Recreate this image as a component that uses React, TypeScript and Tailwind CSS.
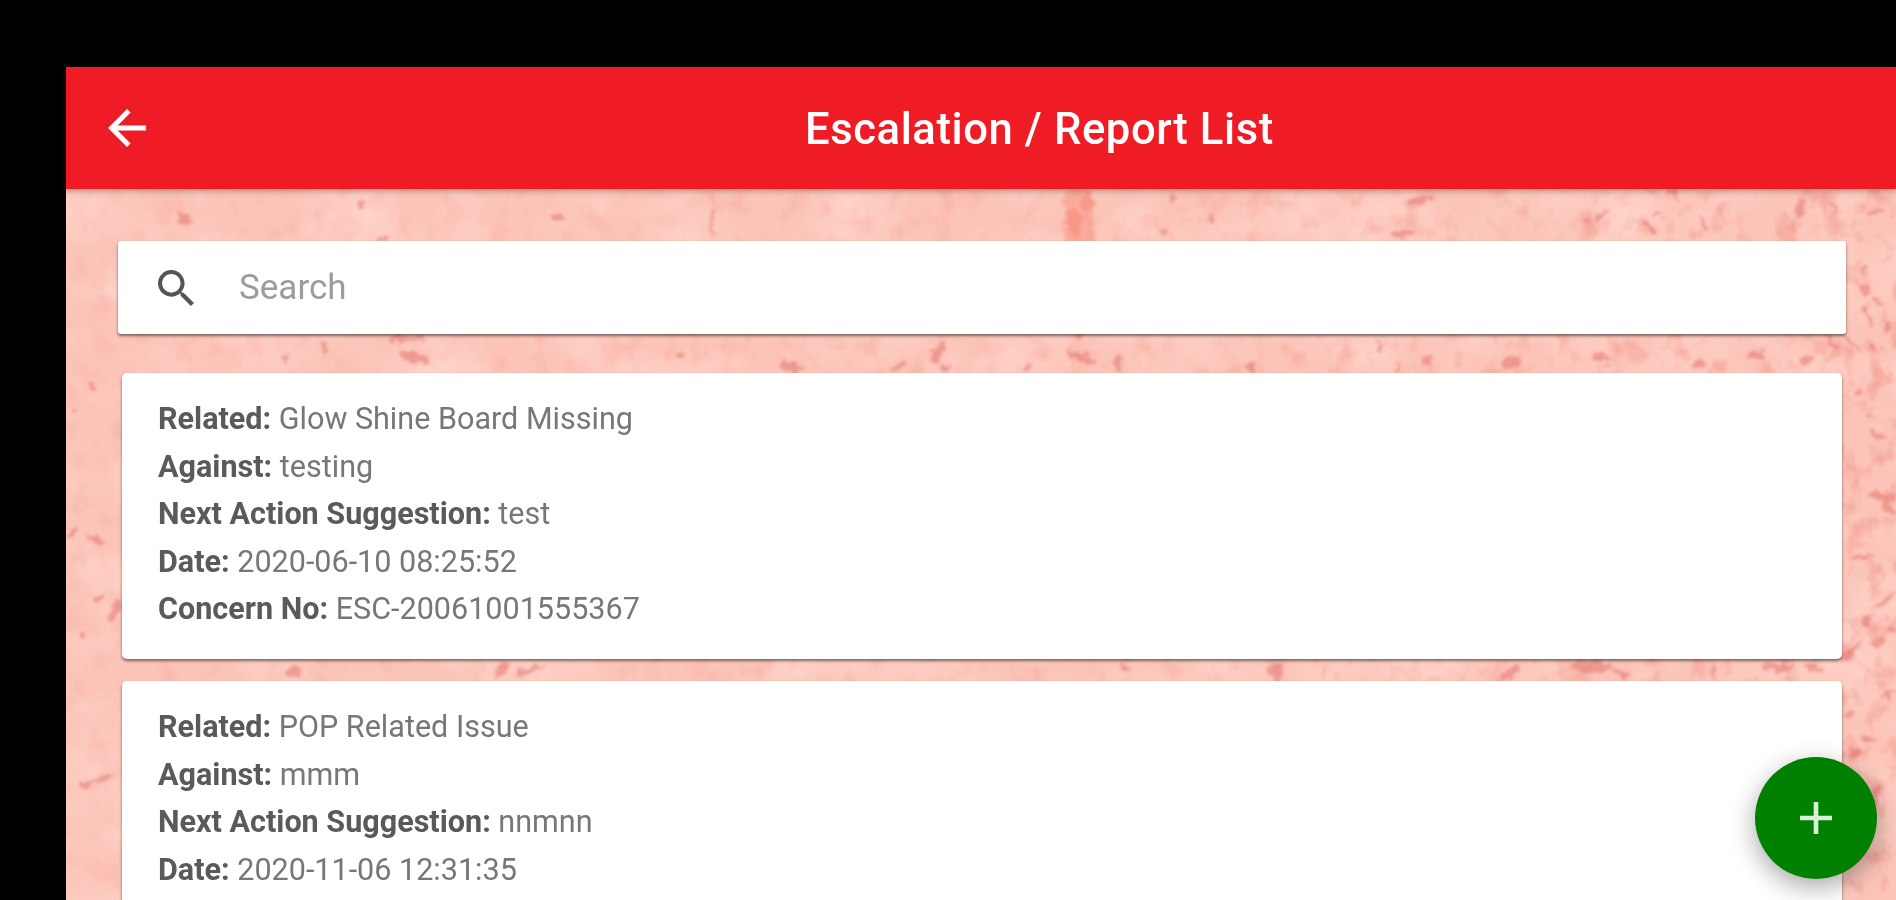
import React from "react";

type Report = {
  related: string;
  against: string;
  suggestion: string;
  date: string;
  concernNo?: string;
};

const reports: Report[] = [
  {
    related: "Glow Shine Board Missing",
    against: "testing",
    suggestion: "test",
    date: "2020-06-10 08:25:52",
    concernNo: "ESC-20061001555367",
  },
  {
    related: "POP Related Issue",
    against: "mmm",
    suggestion: "nnmnn",
    date: "2020-11-06 12:31:35",
  },
];

// Marks in the stone: x, y, half width, half height, angle
const marks: number[][] = [
  [185, 219, 10, 5, 20], [362, 205, 5, 3, -50], [558, 217, 6, 3, -20], [383, 239, 5, 2, 0], [713, 217, 1, 20, 0],
  [1173, 197, 2, 5, 10], [1164, 232, 4, 6, 0], [1212, 217, 2, 7, 8], [1421, 200, 13, 3, -15], [1403, 234, 12, 3, -8],
  [1602, 215, 7, 3, -40], [1588, 223, 5, 2, 40], [1650, 227, 9, 3, 40], [1657, 212, 4, 2, -50], [1674, 193, 8, 3, 50],
  [1704, 223, 2, 9, -20], [1800, 209, 3, 11, 10], [1834, 208, 2, 8, -20], [1876, 212, 9, 3, -10],
  [286, 357, 3, 5, 15], [324, 347, 3, 6, 25], [407, 338, 18, 3, 0], [416, 358, 17, 5, 15], [680, 355, 4, 4, 0],
  [792, 367, 13, 4, 10], [898, 367, 9, 3, -20], [938, 352, 4, 12, 30], [945, 367, 7, 3, 0],
  [1025, 367, 3, 5, 30], [1080, 357, 15, 3, 25], [1077, 336, 4, 3, 0], [1118, 364, 3, 7, 0], [1252, 367, 5, 5, 0],
  [1380, 347, 3, 5, 0], [1427, 360, 8, 3, -30], [1397, 367, 2, 6, 0], [1511, 362, 10, 5, 0], [1602, 358, 9, 4, 20],
  [1756, 355, 9, 4, 0], [1700, 365, 8, 3, 0], [1807, 360, 9, 4, -35],
  [293, 672, 8, 5, 0], [503, 668, 10, 5, -40], [530, 670, 15, 3, -20], [1125, 667, 5, 3, 0], [1276, 672, 8, 8, 0],
  [1324, 673, 1, 9, 0], [1511, 672, 13, 4, -35], [1590, 667, 20, 6, 0], [1620, 674, 10, 3, 30], [1713, 672, 2, 9, 0],
  [1777, 667, 16, 4, 5], [1815, 668, 10, 3, 15],
  [92, 387, 5, 3, 0], [75, 410, 4, 2, 0], [73, 532, 5, 4, 0], [97, 540, 9, 3, 5], [99, 599, 4, 3, 0], [82, 635, 5, 3, 0],
  [115, 610, 4, 12, 20], [85, 785, 6, 3, 0], [100, 780, 12, 2, -15],
  [1865, 268, 2, 3, 0], [1866, 290, 4, 7, -35], [1878, 302, 7, 3, 35], [1868, 317, 2, 12, -20], [1889, 327, 5, 4, 30],
  [1833, 343, 2, 10, -35], [1854, 344, 2, 9, -45], [1873, 347, 3, 8, -25], [1859, 392, 4, 3, 0], [1871, 417, 3, 2, 0],
  [1878, 435, 9, 3, 25], [1883, 497, 13, 5, 15], [1889, 508, 8, 4, 30], [1863, 557, 12, 2, 0], [1879, 642, 9, 4, -15],
  [1856, 647, 3, 8, 20], [1893, 628, 5, 3, 0], [1865, 620, 4, 3, 0], [1886, 600, 12, 3, -40], [1849, 715, 6, 5, 0],
  [1869, 740, 7, 3, 20], [1856, 753, 7, 5, 0], [1889, 695, 11, 2, -15], [1876, 797, 4, 10, 0], [1848, 655, 5, 6, 0],
];

const Texture: React.FC = () => (
  <svg className="absolute inset-0 w-full h-full" aria-hidden="true">
    <defs>
      <filter id="mottle" x="0" y="0" width="100%" height="100%" colorInterpolationFilters="sRGB">
        <feTurbulence type="fractalNoise" baseFrequency="0.012 0.018" numOctaves="3" seed="4" />
        <feColorMatrix values="0 0 0 0 1  0 0 0 0 0.84  0 0 0 0 0.8  1.8 0 0 0 -0.7" />
      </filter>
      <filter id="grain" x="0" y="0" width="100%" height="100%" colorInterpolationFilters="sRGB">
        <feTurbulence type="fractalNoise" baseFrequency="0.045 0.04" numOctaves="3" seed="11" />
        <feColorMatrix values="0 0 0 0 0.93  0 0 0 0 0.5  0 0 0 0 0.46  0 2 0 0 -1" />
      </filter>
      <filter id="rough" x="0" y="0" width="100%" height="100%" filterUnits="userSpaceOnUse">
        <feTurbulence type="fractalNoise" baseFrequency="0.12" numOctaves="2" seed="3" />
        <feDisplacementMap in="SourceGraphic" scale="12" xChannelSelector="R" yChannelSelector="G" />
        <feGaussianBlur stdDeviation="1.8" />
      </filter>
      <linearGradient id="fade">
        <stop offset="0" stopColor="#fff" stopOpacity="0.2" />
        <stop offset="0.6" stopColor="#fff" stopOpacity="0.3" />
        <stop offset="1" stopColor="#fff" stopOpacity="0.7" />
      </linearGradient>
      <mask id="density">
        <rect width="100%" height="100%" fill="url(#fade)" />
      </mask>
    </defs>
    <rect width="100%" height="100%" filter="url(#mottle)" />
    <g mask="url(#density)">
      <rect width="100%" height="100%" filter="url(#grain)" />
    </g>
    <g filter="url(#rough)">
      <g transform="translate(-66 -189)" fill="#dc5a57" fillOpacity="0.42">
        <rect x="1065" y="180" width="28" height="70" fill="#f8816f" fillOpacity="0.38" />
        <ellipse cx="1073" cy="223" rx="7" ry="14" fill="#f8816f" />
        <ellipse cx="1087" cy="203" rx="5" ry="9" fill="#f8816f" />
        {marks.map(([x, y, rx, ry, angle], i) => (
          <ellipse key={i} cx={x} cy={y} rx={rx} ry={ry} transform={`rotate(${angle} ${x} ${y})`} />
        ))}
      </g>
    </g>
  </svg>
);

const Field: React.FC<{ label: string; value: string }> = ({ label, value }) => (
  <p className="whitespace-nowrap">
    <b className="font-bold text-[#5a5a5a]">{label}:</b> {value}
  </p>
);

const App: React.FC = () => {
  return (
    <div className="h-[900px] w-full overflow-hidden bg-black pl-[66px] pt-[67px] font-['Roboto',sans-serif]">
      <div className="relative flex h-full flex-col bg-[#fcc4b8]">
        {/* Header */}
        <header className="relative z-10 flex h-[122px] shrink-0 items-center bg-[#ef1c25] pl-[33px] shadow-[0_2px_6px_rgba(90,60,50,0.45)]">
          <svg viewBox="0 0 24 24" className="size-[56px] fill-white">
            <path
              d="M20 11H7.83l5.59-5.59L12 4l-8 8 8 8 1.41-1.41L7.83 13H20v-2z"
              stroke="white"
              strokeWidth="0.2"
            />
          </svg>
          <h1 className="ml-[650px] mt-[4px] whitespace-nowrap text-[43.6px] font-medium leading-none tracking-[0.0135em] text-white">
            Escalation / Report List
          </h1>
        </header>

        {/* List */}
        <main className="relative flex-1 overflow-hidden pl-[52px] pr-[50px] pt-[52px]">
          <Texture />
          <div className="relative flex h-[93px] items-center rounded-[3px] bg-white pl-[34px] shadow-[0_2px_3px_rgba(0,0,0,0.5)]">
            <svg viewBox="0 0 512 512" className="mt-px size-[48px] fill-[#555]">
              <path d="M337.509 305.372h-17.501l-6.571-5.486c20.791-25.232 33.922-57.054 33.922-93.257C347.358 127.632 283.896 64 205.135 64 127.452 64 64 127.632 64 206.629s63.452 142.628 142.225 142.628c35.011 0 67.831-13.167 92.991-34.008l6.561 5.487v17.551L415.18 448 448 415.086 337.509 305.372zm-131.284 0c-54.702 0-98.463-43.887-98.463-98.743 0-54.858 43.761-98.742 98.463-98.742 54.7 0 98.462 43.884 98.462 98.742 0 54.856-43.762 98.743-98.462 98.743z" />
            </svg>
            <input
              type="text"
              placeholder="Search"
              className="ml-[39px] w-[800px] text-[35px] leading-none outline-none placeholder:text-[#9c9c9c]"
            />
          </div>

          <div className="relative mx-[4px] mt-[39px] flex flex-col gap-[22px]">
            {reports.map((r) => (
              <section
                key={r.date}
                className="h-[286px] rounded-[5px] bg-white pl-[36px] pt-[22px] text-[30.55px] leading-[47.5px] text-[#777] shadow-[0_2px_3px_rgba(0,0,0,0.5)]"
              >
                <Field label="Related" value={r.related} />
                <Field label="Against" value={r.against} />
                <Field label="Next Action Suggestion" value={r.suggestion} />
                <Field label="Date" value={r.date} />
                {r.concernNo && <Field label="Concern No" value={r.concernNo} />}
              </section>
            ))}
          </div>
        </main>

        {/* Add button */}
        <button className="absolute right-[19px] top-[690px] z-10 flex size-[122px] items-center justify-center rounded-full bg-[#008000] shadow-[0_8px_26px_rgba(0,0,0,0.35)]">
          <svg viewBox="0 0 34 34" className="size-[34px]">
            <path d="M17 1v32M1 17h32" stroke="#d8efd8" strokeWidth="4.6" fill="none" />
          </svg>
        </button>
      </div>
    </div>
  );
};

export default App;
